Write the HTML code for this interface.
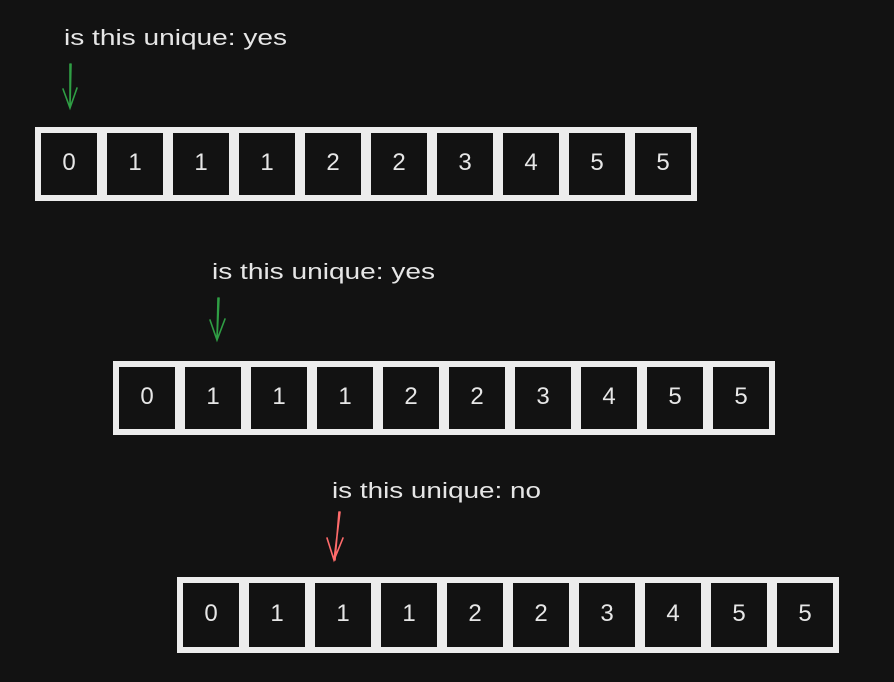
<!DOCTYPE html>
<html><head><meta charset="utf-8"><style>
html,body{margin:0;padding:0;background:#121212;}
svg{display:block}
text{font-family:"Liberation Sans",sans-serif;fill:#e6e6e6}
</style></head><body>
<svg width="894" height="682" viewBox="0 0 894 682" xmlns="http://www.w3.org/2000/svg">
<rect width="894" height="682" fill="#121212"/>
<text x="64" y="45" font-size="22" textLength="223" lengthAdjust="spacingAndGlyphs">is this unique: yes</text>
<text x="212" y="279" font-size="22" textLength="223" lengthAdjust="spacingAndGlyphs">is this unique: yes</text>
<text x="332" y="498" font-size="22" textLength="209" lengthAdjust="spacingAndGlyphs">is this unique: no</text>
<g fill="none" stroke-linecap="round" stroke-width="1.6">
<g stroke="#2f9e44"><path d="M70 64 L70 108 M71 64 L70 108 M63 89 L70 108 L77 88"/></g>
<g stroke="#2f9e44"><path d="M218 298 L217 340 M219 298 L217 340 M210 320 L217 340 L225 319"/></g>
<g stroke="#ff6b6b"><path d="M340 512 L334 560 M339 512 L335 560 M327 538 L334 560 L343 538"/></g>
</g>
<g fill="none" stroke="#ececec" stroke-width="6">
<rect x="38" y="130" width="62" height="68"/><rect x="104" y="130" width="62" height="68"/><rect x="170" y="130" width="62" height="68"/><rect x="236" y="130" width="62" height="68"/><rect x="302" y="130" width="62" height="68"/><rect x="368" y="130" width="62" height="68"/><rect x="434" y="130" width="62" height="68"/><rect x="500" y="130" width="62" height="68"/><rect x="566" y="130" width="62" height="68"/><rect x="632" y="130" width="62" height="68"/>
<rect x="116" y="364" width="62" height="68"/><rect x="182" y="364" width="62" height="68"/><rect x="248" y="364" width="62" height="68"/><rect x="314" y="364" width="62" height="68"/><rect x="380" y="364" width="62" height="68"/><rect x="446" y="364" width="62" height="68"/><rect x="512" y="364" width="62" height="68"/><rect x="578" y="364" width="62" height="68"/><rect x="644" y="364" width="62" height="68"/><rect x="710" y="364" width="62" height="68"/>
<rect x="180" y="580" width="62" height="70"/><rect x="246" y="580" width="62" height="70"/><rect x="312" y="580" width="62" height="70"/><rect x="378" y="580" width="62" height="70"/><rect x="444" y="580" width="62" height="70"/><rect x="510" y="580" width="62" height="70"/><rect x="576" y="580" width="62" height="70"/><rect x="642" y="580" width="62" height="70"/><rect x="708" y="580" width="62" height="70"/><rect x="774" y="580" width="62" height="70"/>
</g>
<g font-size="24" text-anchor="middle">
<text x="69" y="170">0</text><text x="135" y="170">1</text><text x="201" y="170">1</text><text x="267" y="170">1</text><text x="333" y="170">2</text><text x="399" y="170">2</text><text x="465" y="170">3</text><text x="531" y="170">4</text><text x="597" y="170">5</text><text x="663" y="170">5</text>
<text x="147" y="404">0</text><text x="213" y="404">1</text><text x="279" y="404">1</text><text x="345" y="404">1</text><text x="411" y="404">2</text><text x="477" y="404">2</text><text x="543" y="404">3</text><text x="609" y="404">4</text><text x="675" y="404">5</text><text x="741" y="404">5</text>
<text x="211" y="621">0</text><text x="277" y="621">1</text><text x="343" y="621">1</text><text x="409" y="621">1</text><text x="475" y="621">2</text><text x="541" y="621">2</text><text x="607" y="621">3</text><text x="673" y="621">4</text><text x="739" y="621">5</text><text x="805" y="621">5</text>
</g>
</svg>
</body></html>
